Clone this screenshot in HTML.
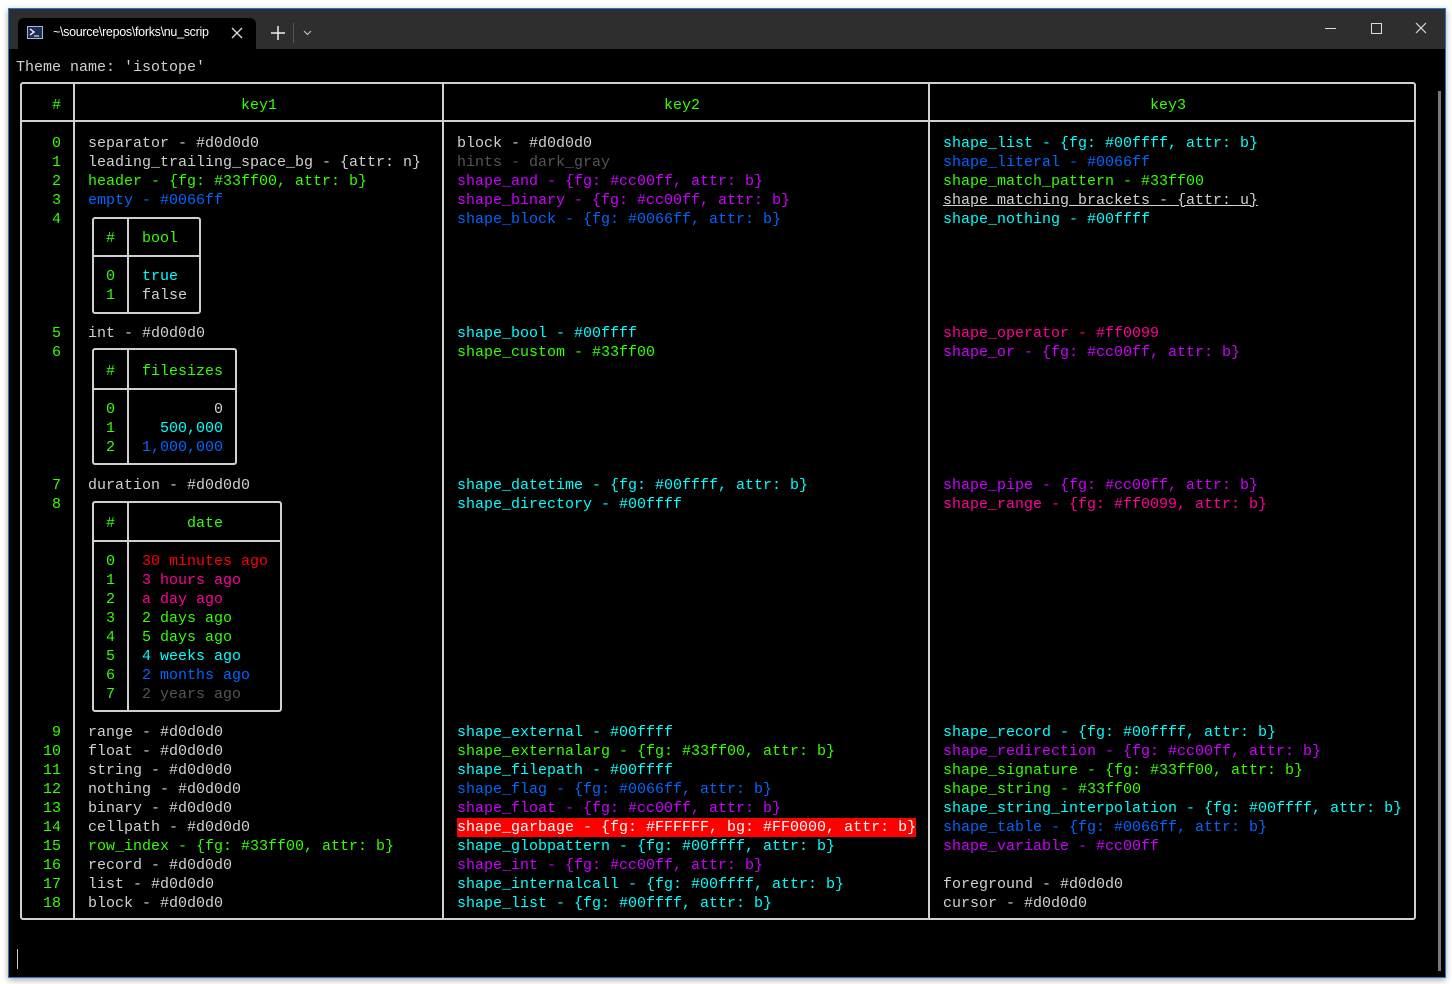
<!DOCTYPE html><html><head><meta charset="utf-8"><style>
body{margin:0;width:1452px;height:984px;background:#fff;position:relative;overflow:hidden;font-family:"Liberation Mono",monospace;font-size:15px}
#win{position:absolute;left:8px;top:8px;width:1436px;height:968px;background:#000;border:1px solid #2a73c9;box-shadow:0 2px 6px rgba(0,0,0,.35)}
#tb{position:absolute;left:0;top:0;width:1436px;height:40px;background:#2e2e2e}
#tab{position:absolute;left:9px;top:9px;width:238px;height:31px;background:#000;border-radius:6px 6px 0 0}
.t{position:absolute;white-space:pre;line-height:19px;height:19px;transform:translateY(2px)}
.g{color:#d0d0d0}.gr{color:#33ff00}.c{color:#00ffff}.b{color:#0066ff}.m{color:#cc00ff}.p{color:#ff0099}.r{color:#ff0000}.d{color:#555}
.box{position:absolute;border:2px solid #d0d0d0;border-radius:3px}
.hl{position:absolute;height:2px;background:#d0d0d0}
.vl{position:absolute;width:2px;background:#d0d0d0}
.n{text-align:right;width:30px}
</style></head><body>
<div id="win">
<div id="tb"><div id="tab">
<svg style="position:absolute;left:9px;top:8px" width="16" height="14"><rect x="0.5" y="0.5" width="15" height="12" fill="#1b2f55" stroke="#9fb8e0"/><path d="M3 3l4 3-4 3" stroke="#fff" fill="none" stroke-width="1.3"/><path d="M7 10h5" stroke="#fff"/></svg>
<div style="position:absolute;left:35px;top:7px;color:#fff;font-family:'Liberation Sans',sans-serif;font-size:12.5px;letter-spacing:-0.3px">~\source\repos\forks\nu_scrip</div>
<svg style="position:absolute;left:213px;top:9px" width="12" height="12"><path d="M1 1l10 10M11 1L1 11" stroke="#ddd" stroke-width="1.3"/></svg>
</div>
<svg style="position:absolute;left:262px;top:17px" width="14" height="14"><path d="M7 0v14M0 7h14" stroke="#eee" stroke-width="1.5"/></svg>
<div style="position:absolute;left:284px;top:14px;width:1px;height:20px;background:#555"></div>
<svg style="position:absolute;left:294px;top:21px" width="9" height="6"><path d="M1 1l3.5 3.5L8 1" stroke="#ccc" fill="none"/></svg>
<div style="position:absolute;left:1316px;top:19px;width:11px;height:1px;background:#ddd"></div>
<div style="position:absolute;left:1362px;top:14px;width:9px;height:9px;border:1px solid #ddd"></div>
<svg style="position:absolute;left:1406px;top:13px" width="12" height="12"><path d="M1 1l10 10M11 1L1 11" stroke="#ddd" stroke-width="1.2"/></svg>
</div>
<div style="position:absolute;left:1429px;top:82px;width:3px;height:880px;background:#777"></div>
<div style="position:absolute;left:8px;top:940px;width:1px;height:20px;background:#ccc"></div>
</div>
<div class="t g" style="left:16px;top:56px">Theme name: 'isotope'</div>
<div class="box" style="left:20px;top:82px;width:1392px;height:834px"></div>
<div class="hl" style="left:20px;top:120px;width:1396px"></div>
<div class="vl" style="left:73px;top:82px;height:836px"></div>
<div class="vl" style="left:442px;top:82px;height:836px"></div>
<div class="vl" style="left:928px;top:82px;height:836px"></div>
<div class="t gr" style="left:52px;top:94px">#</div>
<div class="t gr" style="left:241px;top:94px">key1</div>
<div class="t gr" style="left:664px;top:94px">key2</div>
<div class="t gr" style="left:1150px;top:94px">key3</div>
<!-- index -->
<div class="t gr n" style="left:31px;top:132px">0</div><div class="t gr n" style="left:31px;top:151px">1</div><div class="t gr n" style="left:31px;top:170px">2</div><div class="t gr n" style="left:31px;top:189px">3</div><div class="t gr n" style="left:31px;top:208px">4</div>
<div class="t gr n" style="left:31px;top:322px">5</div><div class="t gr n" style="left:31px;top:341px">6</div>
<div class="t gr n" style="left:31px;top:474px">7</div><div class="t gr n" style="left:31px;top:493px">8</div>
<div class="t gr n" style="left:31px;top:721px">9</div><div class="t gr n" style="left:31px;top:740px">10</div><div class="t gr n" style="left:31px;top:759px">11</div><div class="t gr n" style="left:31px;top:778px">12</div><div class="t gr n" style="left:31px;top:797px">13</div><div class="t gr n" style="left:31px;top:816px">14</div><div class="t gr n" style="left:31px;top:835px">15</div><div class="t gr n" style="left:31px;top:854px">16</div><div class="t gr n" style="left:31px;top:873px">17</div><div class="t gr n" style="left:31px;top:892px">18</div>
<!-- key1 -->
<div class="t g" style="left:88px;top:132px">separator - #d0d0d0</div>
<div class="t g" style="left:88px;top:151px">leading_trailing_space_bg - {attr: n}</div>
<div class="t gr" style="left:88px;top:170px">header - {fg: #33ff00, attr: b}</div>
<div class="t b" style="left:88px;top:189px">empty - #0066ff</div>
<div class="box" style="left:92px;top:217px;width:105px;height:93px"></div>
<div class="hl" style="left:92px;top:255px;width:108px"></div><div class="vl" style="left:127px;top:217px;height:96px"></div>
<div class="t gr" style="left:106px;top:227px">#</div><div class="t gr" style="left:142px;top:227px">bool</div>
<div class="t gr" style="left:106px;top:265px">0</div><div class="t c" style="left:142px;top:265px">true</div>
<div class="t gr" style="left:106px;top:284px">1</div><div class="t g" style="left:142px;top:284px">false</div>
<div class="t g" style="left:88px;top:322px">int - #d0d0d0</div>
<div class="box" style="left:92px;top:348px;width:141px;height:113px"></div>
<div class="hl" style="left:92px;top:388px;width:144px"></div><div class="vl" style="left:127px;top:348px;height:116px"></div>
<div class="t gr" style="left:106px;top:360px">#</div><div class="t gr" style="left:142px;top:360px">filesizes</div>
<div class="t gr" style="left:106px;top:398px">0</div><div class="t g" style="left:142px;top:398px;width:81px;text-align:right">0</div>
<div class="t gr" style="left:106px;top:417px">1</div><div class="t c" style="left:142px;top:417px;width:81px;text-align:right">500,000</div>
<div class="t gr" style="left:106px;top:436px">2</div><div class="t b" style="left:142px;top:436px;width:81px;text-align:right">1,000,000</div>
<div class="t g" style="left:88px;top:474px">duration - #d0d0d0</div>
<div class="box" style="left:92px;top:501px;width:186px;height:207px"></div>
<div class="hl" style="left:92px;top:540px;width:189px"></div><div class="vl" style="left:127px;top:501px;height:210px"></div>
<div class="t gr" style="left:106px;top:512px">#</div><div class="t gr" style="left:187px;top:512px">date</div>
<div class="t gr" style="left:106px;top:550px">0</div><div class="t r" style="left:142px;top:550px">30 minutes ago</div>
<div class="t gr" style="left:106px;top:569px">1</div><div class="t p" style="left:142px;top:569px">3 hours ago</div>
<div class="t gr" style="left:106px;top:588px">2</div><div class="t p" style="left:142px;top:588px">a day ago</div>
<div class="t gr" style="left:106px;top:607px">3</div><div class="t gr" style="left:142px;top:607px">2 days ago</div>
<div class="t gr" style="left:106px;top:626px">4</div><div class="t gr" style="left:142px;top:626px">5 days ago</div>
<div class="t gr" style="left:106px;top:645px">5</div><div class="t c" style="left:142px;top:645px">4 weeks ago</div>
<div class="t gr" style="left:106px;top:664px">6</div><div class="t b" style="left:142px;top:664px">2 months ago</div>
<div class="t gr" style="left:106px;top:683px">7</div><div class="t d" style="left:142px;top:683px">2 years ago</div>
<div class="t g" style="left:88px;top:721px">range - #d0d0d0</div>
<div class="t g" style="left:88px;top:740px">float - #d0d0d0</div>
<div class="t g" style="left:88px;top:759px">string - #d0d0d0</div>
<div class="t g" style="left:88px;top:778px">nothing - #d0d0d0</div>
<div class="t g" style="left:88px;top:797px">binary - #d0d0d0</div>
<div class="t g" style="left:88px;top:816px">cellpath - #d0d0d0</div>
<div class="t gr" style="left:88px;top:835px">row_index - {fg: #33ff00, attr: b}</div>
<div class="t g" style="left:88px;top:854px">record - #d0d0d0</div>
<div class="t g" style="left:88px;top:873px">list - #d0d0d0</div>
<div class="t g" style="left:88px;top:892px">block - #d0d0d0</div>
<!-- key2 -->
<div class="t g" style="left:457px;top:132px">block - #d0d0d0</div>
<div class="t d" style="left:457px;top:151px">hints - dark_gray</div>
<div class="t m" style="left:457px;top:170px">shape_and - {fg: #cc00ff, attr: b}</div>
<div class="t m" style="left:457px;top:189px">shape_binary - {fg: #cc00ff, attr: b}</div>
<div class="t b" style="left:457px;top:208px">shape_block - {fg: #0066ff, attr: b}</div>
<div class="t c" style="left:457px;top:322px">shape_bool - #00ffff</div>
<div class="t gr" style="left:457px;top:341px">shape_custom - #33ff00</div>
<div class="t c" style="left:457px;top:474px">shape_datetime - {fg: #00ffff, attr: b}</div>
<div class="t c" style="left:457px;top:493px">shape_directory - #00ffff</div>
<div class="t c" style="left:457px;top:721px">shape_external - #00ffff</div>
<div class="t gr" style="left:457px;top:740px">shape_externalarg - {fg: #33ff00, attr: b}</div>
<div class="t c" style="left:457px;top:759px">shape_filepath - #00ffff</div>
<div class="t b" style="left:457px;top:778px">shape_flag - {fg: #0066ff, attr: b}</div>
<div class="t m" style="left:457px;top:797px">shape_float - {fg: #cc00ff, attr: b}</div>
<div class="t" style="left:457px;top:816px;background:#ff0000;color:#fff">shape_garbage - {fg: #FFFFFF, bg: #FF0000, attr: b}</div>
<div class="t c" style="left:457px;top:835px">shape_globpattern - {fg: #00ffff, attr: b}</div>
<div class="t m" style="left:457px;top:854px">shape_int - {fg: #cc00ff, attr: b}</div>
<div class="t c" style="left:457px;top:873px">shape_internalcall - {fg: #00ffff, attr: b}</div>
<div class="t c" style="left:457px;top:892px">shape_list - {fg: #00ffff, attr: b}</div>
<!-- key3 -->
<div class="t c" style="left:943px;top:132px">shape_list - {fg: #00ffff, attr: b}</div>
<div class="t b" style="left:943px;top:151px">shape_literal - #0066ff</div>
<div class="t gr" style="left:943px;top:170px">shape_match_pattern - #33ff00</div>
<div class="t g" style="left:943px;top:189px;text-decoration:underline">shape_matching_brackets - {attr: u}</div>
<div class="t c" style="left:943px;top:208px">shape_nothing - #00ffff</div>
<div class="t p" style="left:943px;top:322px">shape_operator - #ff0099</div>
<div class="t m" style="left:943px;top:341px">shape_or - {fg: #cc00ff, attr: b}</div>
<div class="t m" style="left:943px;top:474px">shape_pipe - {fg: #cc00ff, attr: b}</div>
<div class="t p" style="left:943px;top:493px">shape_range - {fg: #ff0099, attr: b}</div>
<div class="t c" style="left:943px;top:721px">shape_record - {fg: #00ffff, attr: b}</div>
<div class="t m" style="left:943px;top:740px">shape_redirection - {fg: #cc00ff, attr: b}</div>
<div class="t gr" style="left:943px;top:759px">shape_signature - {fg: #33ff00, attr: b}</div>
<div class="t gr" style="left:943px;top:778px">shape_string - #33ff00</div>
<div class="t c" style="left:943px;top:797px">shape_string_interpolation - {fg: #00ffff, attr: b}</div>
<div class="t b" style="left:943px;top:816px">shape_table - {fg: #0066ff, attr: b}</div>
<div class="t m" style="left:943px;top:835px">shape_variable - #cc00ff</div>
<div class="t g" style="left:943px;top:873px">foreground - #d0d0d0</div>
<div class="t g" style="left:943px;top:892px">cursor - #d0d0d0</div>
</body></html>
